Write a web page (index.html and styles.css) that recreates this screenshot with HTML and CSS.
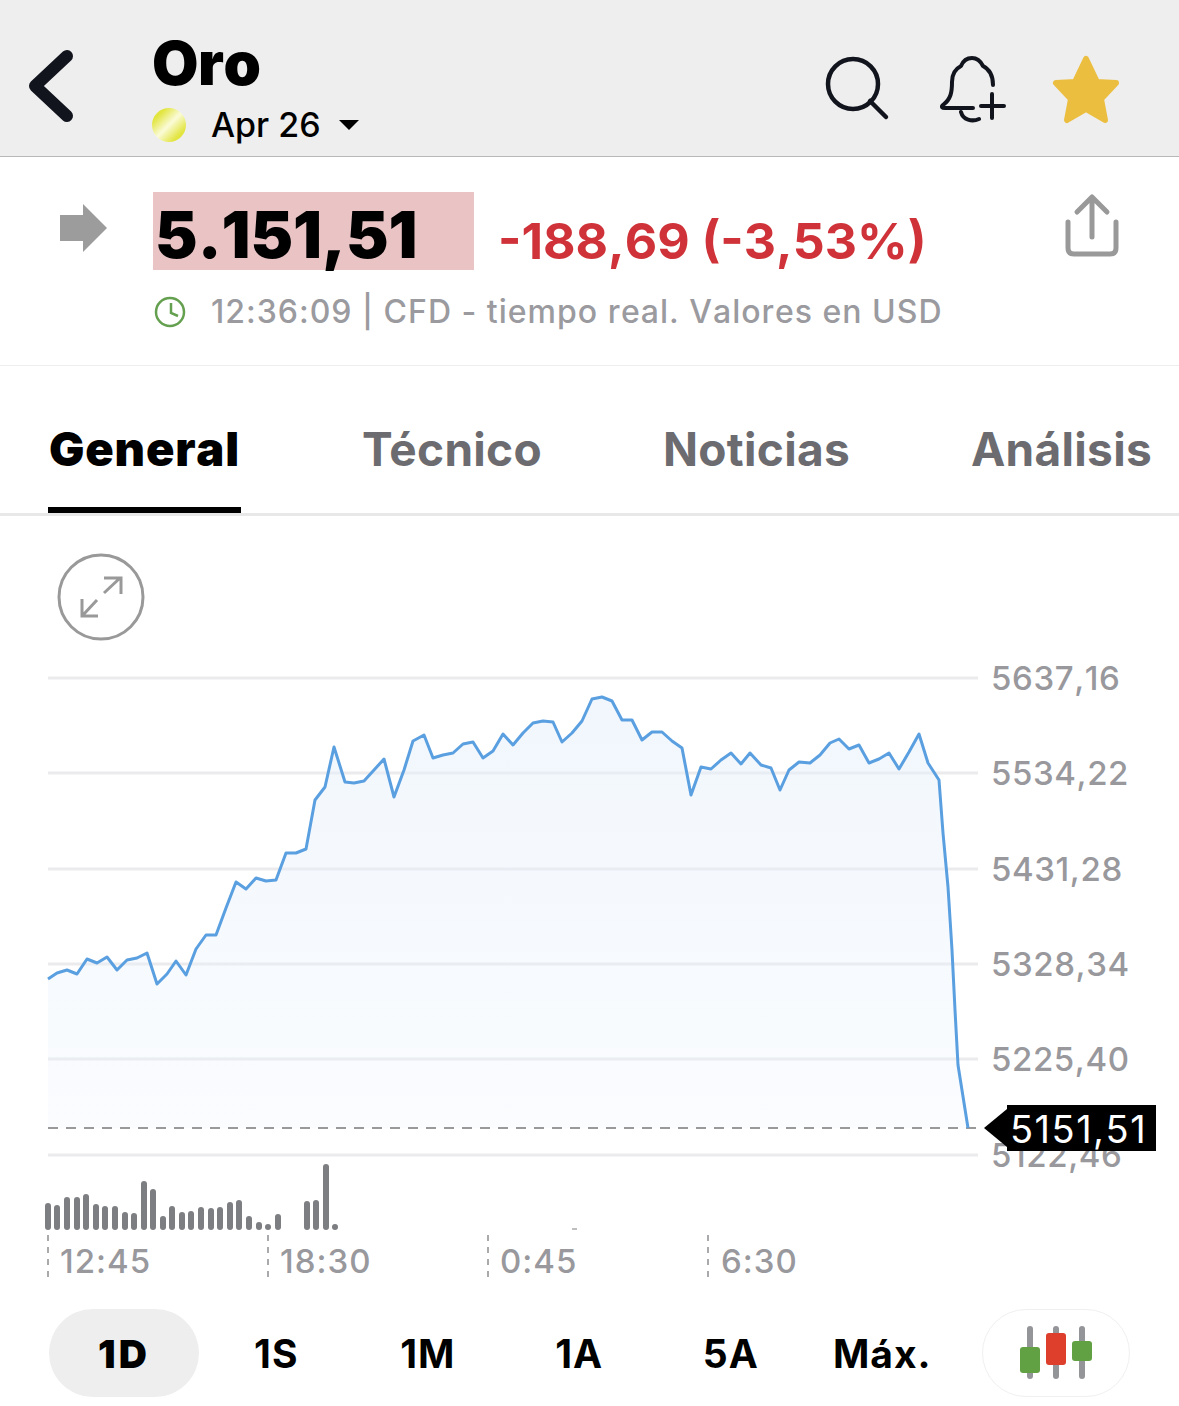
FILE: index.html
```html
<!DOCTYPE html>
<html lang="es">

<head>
    <meta charset="UTF-8">
    <title>Oro</title>
    <link rel="stylesheet" href="styles.css">
</head>

<body>
    <header class="top-bar">
        <svg class="icon back" viewBox="24 44 56 84">
            <path d="M67 56 L35 86 L67 116" />
        </svg>
        <div class="title-block">
            <h1>Oro</h1>
            <div class="contract">
                <span class="coin"></span>
                <span class="month">Apr 26</span>
                <span class="caret"></span>
            </div>
        </div>
        <div class="actions">
            <svg class="icon search" viewBox="825 55 65 66">
                <circle cx="853" cy="84" r="25" />
                <path d="M870 101 L886 117" />
            </svg>
            <svg class="icon bell" viewBox="938 55 68 68">
                <path d="M993 85 C993 76 989 69 983 66 C980 60 976 58 972 58 C967 58 963 61 961 66 C955 69 952 75 952 82 C952 92 951 99 943 105 C941 107 942 108 945 108 L973 108" />
                <path d="M961 112 C963 120 972 122 979 119" />
                <path d="M981 106 H1004 M992 94 V118" />
            </svg>
            <svg class="star" viewBox="1050 52 72 74">
                <polygon points="1086,59 1097,82 1116,83 1101,99 1105,120 1086,109 1067,120 1071,99 1056,83 1075,82" />
            </svg>
        </div>
    </header>

    <section class="quote">
        <div class="quote-main">
            <svg class="flat-arrow" viewBox="60 204 48 48">
                <polygon points="60,215 83,215 83,204 107,228 83,252 83,241 60,241" />
            </svg>
            <div class="price">5.151,51</div>
            <div class="change">-188,69 (-3,53%)</div>
            <svg class="icon share" viewBox="1062 190 60 68">
                <path d="M1068 222 V248 C1068 252 1070 254 1074 254 H1110 C1114 254 1116 252 1116 248 V222" />
                <path d="M1092 237 V197 M1077 212 L1092 197 L1107 212" />
            </svg>
        </div>
        <div class="quote-time">
            <svg class="clock" viewBox="154 295 32 32">
                <circle cx="170" cy="311" r="14" />
                <path d="M171 302 V312 L178 315" />
            </svg>
            <span>12:36:09 | CFD - tiempo real. Valores en USD</span>
        </div>
    </section>

    <nav class="tabs">
        <a class="tab active">General</a>
        <a class="tab">Técnico</a>
        <a class="tab">Noticias</a>
        <a class="tab">Análisis</a>
    </nav>

    <section class="chart">
        <svg class="chart-svg" viewBox="0 516 1179 784">
            <defs>
                <linearGradient id="areaFill" x1="0" y1="0" x2="0" y2="1">
                    <stop offset="0" stop-color="#e6f0fb" stop-opacity="0.55" />
                    <stop offset="1" stop-color="#e6f0fb" stop-opacity="0.2" />
                </linearGradient>
            </defs>

            <!-- expand button -->
            <g class="expand">
                <circle cx="101" cy="597" r="42" />
                <path d="M104 593 L120 578 M104 578 H121 V594 M97 600 L83 615 M82 599 V616 H98" />
            </g>

            <!-- grid -->
            <g class="grid">
                <line x1="48" y1="678" x2="978" y2="678" />
                <line x1="48" y1="773" x2="978" y2="773" />
                <line x1="48" y1="869" x2="978" y2="869" />
                <line x1="48" y1="964" x2="978" y2="964" />
                <line x1="48" y1="1059" x2="978" y2="1059" />
                <line x1="48" y1="1155" x2="978" y2="1155" />
            </g>
            <g class="axis">
                <text x="991" y="690">5637,16</text>
                <text x="991" y="785">5534,22</text>
                <text x="991" y="881">5431,28</text>
                <text x="991" y="976">5328,34</text>
                <text x="991" y="1071">5225,40</text>
                <text x="991" y="1167">5122,46</text>
            </g>

            <!-- price line -->
            <polygon class="area" points="48,979 57,973 67,970 77,974 87,959 97,963 107,957 117,970 127,960 137,958 147,953 157,984 167,974 176,961 186,975 196,949 206,935 216,935 226,908 236,882 246,889 256,878 266,881 276,880 286,853 296,853 306,849 315,800 325,787 334,747 345,782 354,783 364,781 374,770 384,759 394,797 404,770 413,741 424,735 433,758 443,755 453,753 463,744 473,742 483,758 493,751 503,734 513,745 523,733 533,723 543,721 553,722 562,742 572,733 582,721 592,699 602,697 612,701 622,720 632,720 642,740 652,732 662,732 672,741 682,748 691,795 701,767 711,769 721,760 731,753 741,764 750,753 761,765 771,768 780,790 789,770 799,762 810,763 820,755 830,743 839,739 849,749 859,745 869,763 879,759 889,753 899,769 909,752 919,734 928,763 939,780 943,833 948,887 952,950 955,1010 958,1065 968,1128 48,1128" />
            <line class="last-price" x1="48" y1="1128" x2="976" y2="1128" />
            <polyline class="line" points="48,979 57,973 67,970 77,974 87,959 97,963 107,957 117,970 127,960 137,958 147,953 157,984 167,974 176,961 186,975 196,949 206,935 216,935 226,908 236,882 246,889 256,878 266,881 276,880 286,853 296,853 306,849 315,800 325,787 334,747 345,782 354,783 364,781 374,770 384,759 394,797 404,770 413,741 424,735 433,758 443,755 453,753 463,744 473,742 483,758 493,751 503,734 513,745 523,733 533,723 543,721 553,722 562,742 572,733 582,721 592,699 602,697 612,701 622,720 632,720 642,740 652,732 662,732 672,741 682,748 691,795 701,767 711,769 721,760 731,753 741,764 750,753 761,765 771,768 780,790 789,770 799,762 810,763 820,755 830,743 839,739 849,749 859,745 869,763 879,759 889,753 899,769 909,752 919,734 928,763 939,780 943,833 948,887 952,950 955,1010 958,1065 968,1128" />

            <!-- volume -->
            <g class="volume">
                <line x1="48" y1="1206" x2="48" y2="1227" />
                <line x1="57" y1="1208" x2="57" y2="1227" />
                <line x1="67" y1="1200" x2="67" y2="1227" />
                <line x1="77" y1="1200" x2="77" y2="1227" />
                <line x1="86" y1="1197" x2="86" y2="1227" />
                <line x1="96" y1="1207" x2="96" y2="1227" />
                <line x1="105" y1="1209" x2="105" y2="1227" />
                <line x1="115" y1="1209" x2="115" y2="1227" />
                <line x1="125" y1="1215" x2="125" y2="1227" />
                <line x1="134" y1="1216" x2="134" y2="1227" />
                <line x1="144" y1="1184" x2="144" y2="1227" />
                <line x1="153" y1="1192" x2="153" y2="1227" />
                <line x1="163" y1="1219" x2="163" y2="1227" />
                <line x1="172" y1="1209" x2="172" y2="1227" />
                <line x1="182" y1="1215" x2="182" y2="1227" />
                <line x1="191" y1="1214" x2="191" y2="1227" />
                <line x1="201" y1="1210" x2="201" y2="1227" />
                <line x1="211" y1="1211" x2="211" y2="1227" />
                <line x1="220" y1="1210" x2="220" y2="1227" />
                <line x1="230" y1="1205" x2="230" y2="1227" />
                <line x1="239" y1="1203" x2="239" y2="1227" />
                <line x1="249" y1="1219" x2="249" y2="1227" />
                <line x1="259" y1="1225" x2="259" y2="1227" />
                <line x1="268" y1="1227" x2="268" y2="1227" />
                <line x1="278" y1="1217" x2="278" y2="1227" />
                <line x1="307" y1="1204" x2="307" y2="1227" />
                <line x1="316" y1="1203" x2="316" y2="1227" />
                <line x1="326" y1="1167" x2="326" y2="1227" />
                <line x1="335" y1="1227" x2="335" y2="1227" />
            </g>
            <line class="vol-mark" x1="572" y1="1229" x2="577" y2="1229" />

            <!-- time axis -->
            <g class="ticks">
                <line x1="48" y1="1235" x2="48" y2="1278" />
                <line x1="268" y1="1235" x2="268" y2="1278" />
                <line x1="488" y1="1235" x2="488" y2="1278" />
                <line x1="708" y1="1235" x2="708" y2="1278" />
            </g>
            <g class="axis times">
                <text x="60" y="1273">12:45</text>
                <text x="280" y="1273">18:30</text>
                <text x="500" y="1273">0:45</text>
                <text x="721" y="1273">6:30</text>
            </g>
        </svg>
        <div class="last-tag">5151,51</div>
    </section>

    <div class="ranges">
        <button class="range selected">1D</button>
        <button class="range">1S</button>
        <button class="range">1M</button>
        <button class="range">1A</button>
        <button class="range">5A</button>
        <button class="range">Máx.</button>
        <button class="candles">
            <svg viewBox="1018 1324 76 58">
                <path class="wick" d="M1030 1329 V1376 M1056 1329 V1376 M1082 1329 V1376" />
                <rect class="up" x="1020" y="1347" width="20" height="26" rx="3" />
                <rect class="down" x="1046" y="1333" width="20" height="32" rx="3" />
                <rect class="up" x="1072" y="1341" width="20" height="20" rx="3" />
            </svg>
        </button>
    </div>
</body>

</html>
```

FILE: styles.css
```css
* {
    box-sizing: border-box;
}
body {
    margin: 0;
    width: 1179px;
    height: 1406px;
    overflow: hidden;
    background-color: white;
    font-family: Inter, "Liberation Sans", sans-serif;
    font-kerning: none;
}
svg {
    display: block;
}
.icon {
    fill: none;
    stroke-linecap: round;
    stroke-linejoin: round;
}

/* top bar */
.top-bar {
    display: flex;
    align-items: flex-start;
    height: 157px;
    padding-left: 24px;
    background-color: #eeeeef;
    border-bottom: 1px solid #b8b8b8;
}
.back {
    width: 56px;
    height: 84px;
    margin-top: 44px;
    stroke: #11141c;
    stroke-width: 12;
}
.title-block {
    margin-left: 72px;
    margin-top: 30px;
}
h1 {
    margin: 0;
    font-size: 60px;
    line-height: 66px;
    font-weight: 900;
    color: black;
    letter-spacing: -0.5px;
}
.contract {
    display: flex;
    align-items: center;
    margin-top: 6px;
}
.coin {
    width: 34px;
    height: 34px;
    border-radius: 50%;
    background: linear-gradient(135deg, #e2e540 20%, #fbfbd8 50%, #e2e540 80%);
}
.month {
    margin-left: 25px;
    font-size: 34px;
    line-height: 46px;
    font-weight: 500;
    color: black;
}
.caret {
    margin-left: 18px;
    width: 0;
    height: 0;
    border-left: 10px solid transparent;
    border-right: 10px solid transparent;
    border-top: 10px solid black;
}
.actions {
    display: flex;
    align-items: flex-start;
    margin-left: auto;
    padding-right: 57px;
}
.search {
    width: 65px;
    height: 66px;
    margin-top: 55px;
    stroke: #11141c;
    stroke-width: 4.5;
}
.bell {
    width: 68px;
    height: 68px;
    margin-top: 55px;
    margin-left: 48px;
    stroke: #11141c;
    stroke-width: 4;
}
.star {
    width: 72px;
    height: 74px;
    margin-top: 52px;
    margin-left: 44px;
    fill: #ecbe40;
    stroke: #ecbe40;
    stroke-width: 6;
    stroke-linejoin: round;
}

/* quote */
.quote {
    height: 209px;
    border-bottom: 1px solid #eeeeee;
}
.quote-main {
    display: flex;
    align-items: flex-start;
    height: 100px;
    padding-left: 60px;
    padding-top: 35px;
}
.flat-arrow {
    width: 48px;
    height: 48px;
    margin-top: 12px;
    fill: #9c9c9c;
}
.price {
    width: 321px;
    height: 78px;
    margin-left: 45px;
    padding-left: 2px;
    padding-top: 7px;
    background-color: #eac4c5;
    font-size: 64px;
    line-height: 71px;
    font-weight: 900;
    color: black;
}
.change {
    margin-left: 24px;
    font-size: 50px;
    line-height: 98px;
    font-weight: 700;
    color: #cf3339;
}
.share {
    width: 60px;
    height: 68px;
    margin-left: auto;
    margin-right: 57px;
    margin-top: -2px;
    stroke: #999999;
    stroke-width: 5;
}
.quote-time {
    display: flex;
    align-items: center;
    margin-top: 35px;
    padding-left: 154px;
    font-size: 32px;
    line-height: 40px;
    font-weight: 500;
    color: #9a9a9f;
    letter-spacing: 1px;
}
.clock {
    width: 32px;
    height: 32px;
    margin-right: 25px;
    fill: none;
    stroke: #64a04f;
    stroke-width: 2.5;
}

/* tabs */
.tabs {
    display: flex;
    gap: 121px;
    height: 150px;
    padding-left: 48px;
    border-bottom: 3px solid #e8e8e9;
}
.tab {
    height: 147px;
    padding-top: 53px;
    font-size: 46px;
    line-height: 60px;
    font-weight: 700;
    font-kerning: normal;
    color: #6b6b70;
    letter-spacing: 0.3px;
}
.tab.active {
    padding-left: 1px;
    padding-right: 1px;
    font-size: 47px;
    font-weight: 900;
    font-kerning: none;
    color: black;
    letter-spacing: 0.8px;
    border-bottom: 6px solid black;
}

/* chart */
.chart {
    position: relative;
    height: 784px;
}
.chart-svg {
    width: 1179px;
    height: 784px;
}
.expand {
    fill: none;
    stroke: #999999;
    stroke-width: 3;
}
.grid line {
    stroke: #ebebed;
    stroke-width: 3;
}
.axis text {
    font-size: 33px;
    font-weight: 500;
    fill: #98989d;
    letter-spacing: 0.6px;
}
.times text {
    letter-spacing: 1px;
}
.area {
    fill: url(#areaFill);
}
.line {
    fill: none;
    stroke: #5a9fe0;
    stroke-width: 3;
    stroke-linejoin: round;
}
.last-price {
    stroke: #999999;
    stroke-width: 2;
    stroke-dasharray: 10 8;
}
.volume line {
    stroke: #7d7e82;
    stroke-width: 6;
    stroke-linecap: round;
}
.vol-mark {
    stroke: #7d7e82;
    stroke-width: 1;
}
.ticks line {
    stroke: #8f8f93;
    stroke-width: 1.5;
    stroke-dasharray: 6 6;
}
.last-tag {
    position: absolute;
    left: 1007px;
    top: 589px;
    width: 149px;
    height: 46px;
    padding-left: 3px;
    background-color: black;
    color: white;
    font-size: 38px;
    line-height: 48px;
    font-weight: 400;
    letter-spacing: 1.5px;
}
.last-tag::before {
    content: "";
    position: absolute;
    left: -23px;
    top: 4px;
    border-top: 19px solid transparent;
    border-bottom: 19px solid transparent;
    border-right: 23px solid black;
}

/* range buttons */
.ranges {
    display: flex;
    align-items: flex-start;
    padding-left: 49px;
    padding-top: 9px;
}
.range {
    width: 151.5px;
    height: 88px;
    padding: 0;
    border: none;
    border-radius: 44px;
    background: none;
    font-family: inherit;
    font-size: 39px;
    font-weight: 700;
    color: black;
    letter-spacing: 1px;
    font-kerning: none;
}
.range.selected {
    width: 150px;
    margin-right: 1.5px;
    background-color: #eeeeef;
    font-weight: 900;
    letter-spacing: 3px;
}
.candles {
    display: flex;
    align-items: center;
    justify-content: center;
    width: 148px;
    height: 88px;
    margin-left: 24px;
    padding: 0;
    border: 1px solid #f0f0f0;
    border-radius: 44px;
    background: white;
}
.candles svg {
    width: 76px;
    height: 58px;
}
.wick {
    fill: none;
    stroke: #949599;
    stroke-width: 6;
    stroke-linecap: round;
}
.up {
    fill: #62a044;
}
.down {
    fill: #dd3f2c;
}
```
